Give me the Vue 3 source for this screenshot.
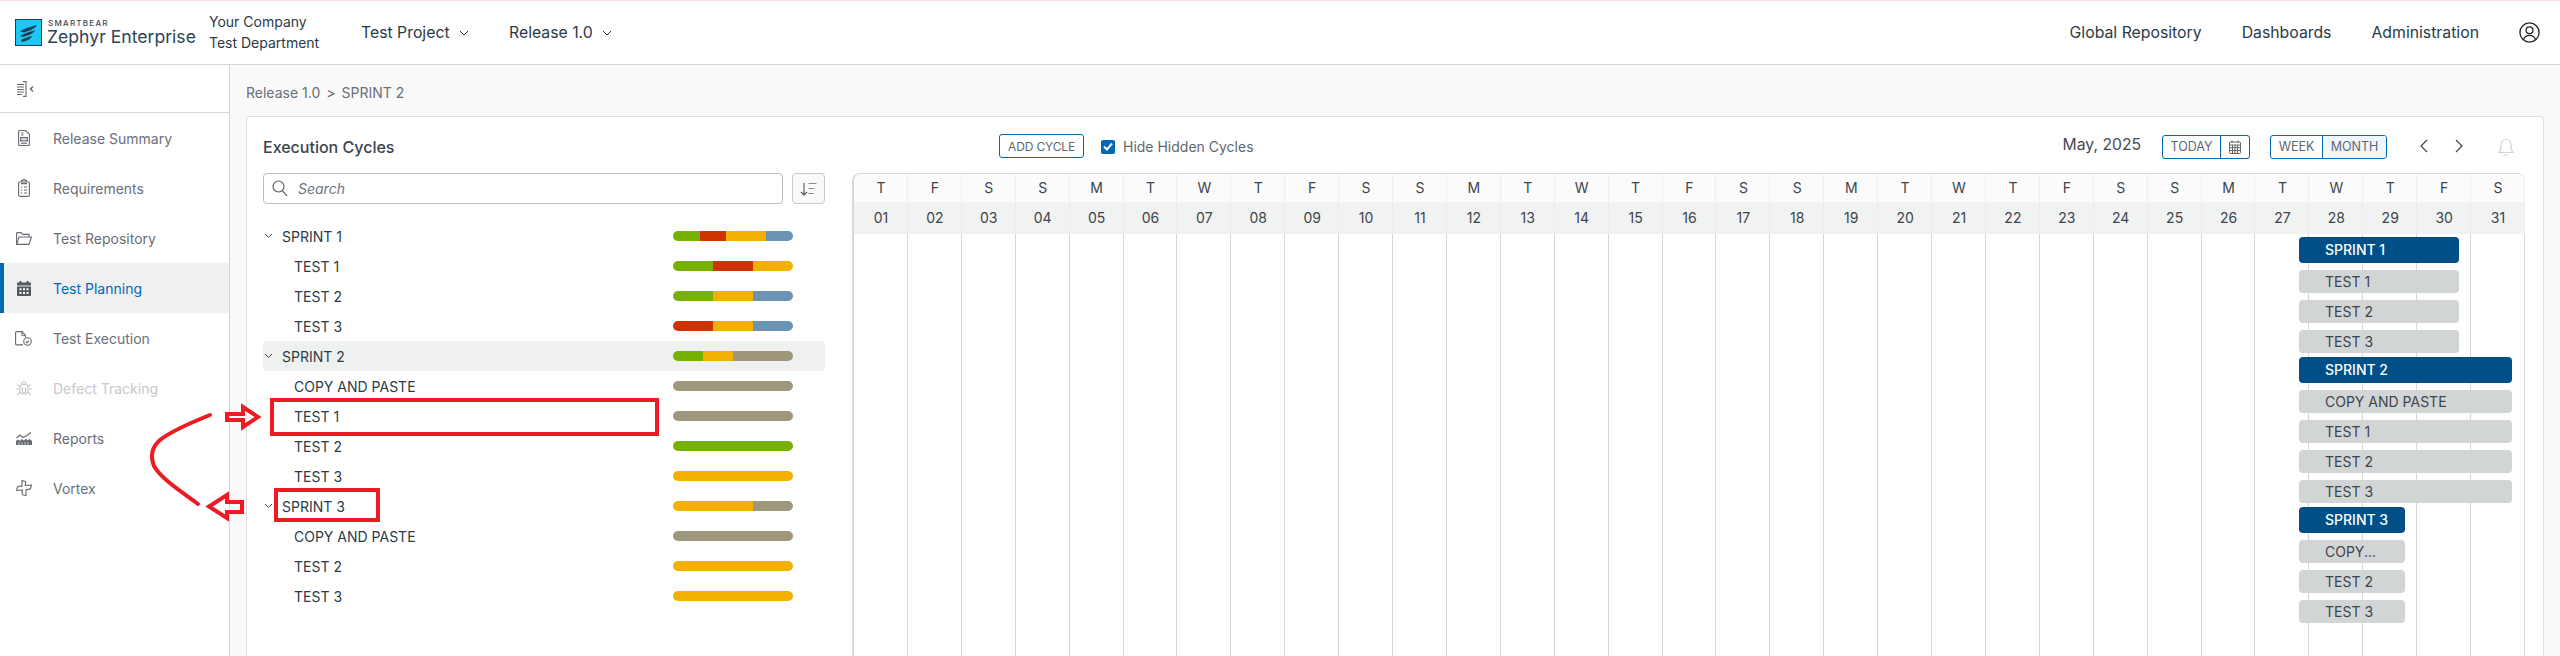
<script setup>
const navItems = [
  { label: 'Release Summary', icon: 'summary' },
  { label: 'Requirements', icon: 'req' },
  { label: 'Test Repository', icon: 'folder' },
  { label: 'Test Planning', icon: 'cal', active: true },
  { label: 'Test Execution', icon: 'exec' },
  { label: 'Defect Tracking', icon: 'bug', disabled: true },
  { label: 'Reports', icon: 'reports' },
  { label: 'Vortex', icon: 'vortex' }
]
const G = '#76b000', R = '#cc3300', Y = '#f4b000', B = '#6b94b4', N = '#9e977b'
const rows = [
  { name: 'SPRINT 1', sprint: true, bar: [[G, 2], [R, 2], [Y, 3], [B, 2]], w: 160 },
  { name: 'TEST 1', bar: [[G, 1], [R, 1], [Y, 1]], w: 160 },
  { name: 'TEST 2', bar: [[G, 1], [Y, 1], [B, 1]], w: 160 },
  { name: 'TEST 3', bar: [[R, 1], [Y, 1], [B, 1]], w: 160 },
  { name: 'SPRINT 2', sprint: true, selected: true, bar: [[G, 1], [Y, 1], [N, 2]], w: 213 },
  { name: 'COPY AND PASTE', bar: [[N, 1]], w: 213 },
  { name: 'TEST 1', bar: [[N, 1]], w: 213 },
  { name: 'TEST 2', bar: [[G, 1]], w: 213 },
  { name: 'TEST 3', bar: [[Y, 1]], w: 213 },
  { name: 'SPRINT 3', sprint: true, bar: [[Y, 2], [N, 1]], w: 106 },
  { name: 'COPY AND PASTE', short: 'COPY...', bar: [[N, 1]], w: 106 },
  { name: 'TEST 2', bar: [[Y, 1]], w: 106 },
  { name: 'TEST 3', bar: [[Y, 1]], w: 106 }
]
const letters = ['T', 'F', 'S', 'S', 'M', 'T', 'W']
const days = Array.from({ length: 31 }, (_, i) => ({
  w: letters[i % 7],
  d: String(i + 1).padStart(2, '0')
}))
const ganttStart = 1445
function ganttStyle(r) {
  return { marginLeft: ganttStart + 'px', width: r.w + 'px' }
}
</script>

<template>
  <div class="app">
    <header class="topbar">
      <div class="logo">
        <svg class="logo-mark" width="27" height="27" viewBox="0 0 27 27">
          <rect x="0.5" y="0.5" width="26" height="26" fill="#1cc8f6" stroke="#1d4054" />
          <path d="M5 12.500C10 9 16 7.500 22 6C20 10 15 11.500 9 13.500ZM5 17C10 14 15 12.500 20 11.500C18 15 13 16.500 8 18ZM6 21C10 19 14 17.500 17 17C16 20 12 22 7 23Z" fill="#1d4054" />
        </svg>
        <div class="logo-text">
          <span class="brand-small">SMARTBEAR</span>
          <span class="brand-big">Zephyr Enterprise</span>
        </div>
      </div>
      <div class="org">
        <span>Your Company</span>
        <span>Test Department</span>
      </div>
      <div class="picker first">Test Project
        <svg width="10" height="6" viewBox="0 0 10 6"><path d="M1 1l4 4 4-4" fill="none" stroke="#333" /></svg>
      </div>
      <div class="picker second">Release 1.0
        <svg width="10" height="6" viewBox="0 0 10 6"><path d="M1 1l4 4 4-4" fill="none" stroke="#333" /></svg>
      </div>
      <nav class="topnav">
        <a>Global Repository</a>
        <a>Dashboards</a>
        <a>Administration</a>
        <svg class="user" width="21" height="21" viewBox="0 0 21 21" fill="none" stroke="#222" stroke-width="1.3">
          <circle cx="10.5" cy="10.5" r="9.6" />
          <circle cx="10.5" cy="8.3" r="3.4" />
          <path d="M4.6 17.5c.8-3 3-4.2 5.9-4.2s5.100 1.200 5.900 4.200" />
        </svg>
      </nav>
    </header>

    <div class="main">
      <aside class="sidebar">
        <div class="toggle">
          <svg width="17" height="16" viewBox="0 0 17 16" fill="none" stroke="#666a70" stroke-width="1.100">
            <path d="M0 3.500h7M0 6h7M0 8.500h7M0 11h7M0 13.500h5" />
            <path d="M6 .6h3V15.400H6" />
            <path d="M16 5.500L13.500 8l2.500 2.500" stroke-width="1.500" />
          </svg>
        </div>
        <div
          v-for="item in navItems"
          :key="item.label"
          class="nav-item"
          :class="{ active: item.active, disabled: item.disabled }"
        >
          <span class="nav-icon">
            <svg v-if="item.icon === 'summary'" width="12" height="16" viewBox="0 0 12 16" fill="none" stroke="#666a70" stroke-width="1.100">
              <path d="M.6 1.500a1 1 0 0 1 1-1h6l3.800 3.800v10.200a1 1 0 0 1-1 1H1.600a1 1 0 0 1-1-1z" />
              <path d="M3 3h2.500M3 5h2.500" />
              <rect x="2.600" y="7.500" width="6.800" height="3.500" fill="#666a70" fill-opacity=".25" />
              <path d="M3 13.300h6" />
            </svg>
            <svg v-else-if="item.icon === 'req'" width="12" height="18" viewBox="0 0 12 18" fill="none" stroke="#666a70" stroke-width="1.100">
              <rect x=".6" y="3" width="10.800" height="14.400" rx="1.500" />
              <path d="M3.500 3V1.500h1.500a1 1 0 0 1 2 0h1.500V3M3 4.600h6" />
              <path d="M2.800 8h1.500M6 8h3.200M2.800 11h1.500M6 11h3.200M2.800 14h1.500M6 14h3.200" />
            </svg>
            <svg v-else-if="item.icon === 'folder'" width="16" height="13" viewBox="0 0 16 13" fill="none" stroke="#666a70" stroke-width="1.100">
              <path d="M.6 12.400V1.200a.6.6 0 0 1 .6-.6h4l1.500 1.800h6.300v2.600" />
              <path d="M.6 12.400L3 5H15.400L13 12.400z" />
            </svg>
            <svg v-else-if="item.icon === 'cal'" width="14" height="15" viewBox="0 0 14 15">
              <path d="M2.500 0h2v1.500h5V0h2v1.500H14V4.500H0V1.500h2.500zM0 5.500h14v8.500a1 1 0 0 1-1 1H1a1 1 0 0 1-1-1z" fill="#55595e" />
              <path d="M2.500 7.300h2v2h-2zM6 7.300h2v2H6zM9.500 7.300h2v2h-2zM2.500 11h2v2h-2zM6 11h2v2H6zM9.500 11h2v2h-2z" fill="#fff" />
            </svg>
            <svg v-else-if="item.icon === 'exec'" width="17" height="15" viewBox="0 0 17 15" fill="none" stroke="#666a70" stroke-width="1.100">
              <path d="M8 13.900H1.600a1 1 0 0 1-1-1V1.600a1 1 0 0 1 1-1H7l3.400 3.600v2.300" />
              <path d="M7 .6v3.600h3.400" />
              <circle cx="12.500" cy="10.500" r="3.800" />
              <path d="M10.800 10.500l1.200 1.200 2-2" />
            </svg>
            <svg v-else-if="item.icon === 'bug'" width="16" height="16" viewBox="0 0 16 16" fill="none" stroke="#c6c8ca" stroke-width="1.100">
              <rect x="4" y="4.500" width="8" height="9.500" rx="3.500" />
              <path d="M5.500 4.500a2.500 2.500 0 0 1 5 0" />
              <path d="M6.500 7v5.500h3V7M4 6.500L1.500 4.500M12 6.500l2.500-2M4 9H0M12 9h4M4 12l-3 3M12 12l3 3" />
            </svg>
            <svg v-else-if="item.icon === 'reports'" width="16" height="13" viewBox="0 0 16 13" fill="none" stroke="#666a70" stroke-width="1.100">
              <path d="M.5 6L4 3l3 2.500L10 4l5-3.500" />
              <path d="M0 13V9l2-1.500L4 9l1.500-2L8 8.500 10 6.500l1.500 2L13.500 7 16 9v4z" fill="#666a70" stroke="none" />
              <path d="M3 13V10M6 13V10M9 13V10M12 13V10" stroke="#fff" stroke-width=".6" />
            </svg>
            <svg v-else width="16" height="16" viewBox="0 0 16 16" fill="none" stroke="#666a70" stroke-width="1.100" stroke-linejoin="round">
              <path d="M6 .6L9.500 1.500Q10 4 9 5.500L15.500 5 14.500 8.500Q12 10 10 9.500L10 15.400 7 15Q5.500 12.500 6.500 10L.6 10.500 1.500 7Q4 5.500 6 6.500Z" />
            </svg>
          </span>
          <span class="nav-label">{{ item.label }}</span>
        </div>
      </aside>

      <section class="content">
        <div class="crumbs"><span>Release 1.0</span><span>&gt;</span><span>SPRINT 2</span></div>
        <div class="card">
          <div class="left-pane">
            <h2 class="title">Execution Cycles</h2>
            <div class="search-row">
              <div class="search">
                <svg width="16" height="17" viewBox="0 0 16 17" fill="none" stroke="#555" stroke-width="1.100">
                  <circle cx="6.500" cy="6.500" r="5.500" />
                  <path d="M10.500 10.800l4.500 5" />
                </svg>
                <span>Search</span>
              </div>
              <button class="sort">
                <svg width="18" height="14" viewBox="0 0 18 14" fill="none" stroke="#555" stroke-width="1.100">
                  <path d="M4 1v12M1 10l3 3 3-3" />
                  <path d="M8.500 1.500h8M8.500 6.500h6M8.500 11.500h5" stroke="#888" />
                </svg>
              </button>
            </div>
            <div class="tree">
              <div
                v-for="(r, i) in rows"
                :key="i"
                class="tree-row"
                :class="{ sprint: r.sprint, selected: r.selected }"
              >
                <svg v-if="r.sprint" class="chev" width="9" height="6" viewBox="0 0 9 6">
                  <path d="M1 1l3.500 3.500L8 1" fill="none" stroke="#444" />
                </svg>
                <span class="tree-name">{{ r.name }}</span>
                <span class="status-bar">
                  <i v-for="(s, j) in r.bar" :key="j" :style="{ background: s[0], flexGrow: s[1] }"></i>
                </span>
              </div>
            </div>
          </div>

          <div class="right-pane">
            <div class="toolbar">
              <button class="btn add">ADD CYCLE</button>
              <label class="check">
                <span class="box">
                  <svg width="10" height="9" viewBox="0 0 10 9"><path d="M1 4.500l3 3L9 1.500" fill="none" stroke="#fff" stroke-width="2" /></svg>
                </span>
                Hide Hidden Cycles
              </label>
              <span class="month">May, 2025</span>
              <div class="btn-group today-group">
                <span class="seg today">TODAY</span>
                <span class="seg calbtn">
                  <svg width="12" height="14" viewBox="0 0 12 14" fill="none" stroke="#666" stroke-width="1">
                    <rect x=".5" y="2" width="11" height="11.500" rx="1" />
                    <path d="M.5 5h11M3 .5V3M9 .5V3M.5 7.700h11M.5 10.500h11M3.500 5v8.500M6 5v8.500M8.500 5v8.500" />
                  </svg>
                </span>
              </div>
              <div class="btn-group view-group">
                <span class="seg week">WEEK</span>
                <span class="seg monthseg">MONTH</span>
              </div>
              <svg class="arrow a1" width="8" height="14" viewBox="0 0 8 14"><path d="M7 1L1 7l6 6" fill="none" stroke="#444" stroke-width="1.200" /></svg>
              <svg class="arrow a2" width="8" height="14" viewBox="0 0 8 14"><path d="M1 1l6 6-6 6" fill="none" stroke="#444" stroke-width="1.200" /></svg>
              <svg class="bell" width="16" height="19" viewBox="0 0 16 19" fill="none" stroke="#cfd1d3" stroke-width="1.200">
                <path d="M8 1.500c-3 0-5 2.300-5 5.500v4L1 14.500h14L13 11V7c0-3.200-2-5.500-5-5.500z" />
                <path d="M6 16.500c.5 1 3.500 1 4 0" />
              </svg>
            </div>

            <div class="calendar">
              <div class="grid-lines">
                <span v-for="d in days" :key="d.d"></span>
              </div>
              <div class="cal-head weekdays">
                <span v-for="d in days" :key="d.d">{{ d.w }}</span>
              </div>
              <div class="cal-head dates">
                <span v-for="d in days" :key="d.d">{{ d.d }}</span>
              </div>
              <div class="gantt">
                <div v-for="(r, i) in rows" :key="i" class="gantt-row" :class="{ sprint: r.sprint }">
                  <div class="gantt-bar" :style="ganttStyle(r)">{{ r.short || r.name }}</div>
                </div>
              </div>
            </div>
          </div>
        </div>
      </section>
    </div>

    <svg class="annotations" width="700" height="200" viewBox="0 0 700 200" fill="none" stroke="#ed1c24" stroke-width="4">
      <rect x="272" y="70" width="385" height="34" />
      <rect x="276" y="160" width="102" height="30" />
      <path d="M227 84h16v-7l15 10-15 10v-7h-16z" />
      <path d="M242 172h-15v-7L209 176.500 227 188v-6h15z" />
      <path d="M210 85C190 93 170 102 160 110C152 117 150 126 154 136C162 150 184 163 198 174" stroke-linecap="round" />
    </svg>
  </div>
</template>

<style>
html, body { margin: 0; padding: 0; background: #fff; overflow: hidden; }
</style>

<style scoped>
.app {
  position: relative;
  width: 2560px;
  height: 656px;
  overflow: hidden;
  display: flex;
  flex-direction: column;
  font-family: Inter, "Liberation Sans", sans-serif;
  font-size: 14px;
  color: #2c3a47;
  background: #fff;
}
.topbar {
  height: 63px;
  flex: none;
  display: flex;
  align-items: center;
  border-top: 1px solid #f9dfdb;
  border-bottom: 1px solid #d6d8d8;
  padding-left: 15px;
  padding-right: 20px;
}
.logo { display: flex; align-items: center; width: 194px; flex: none; }
.logo-mark { flex: none; }
.logo-text { display: flex; flex-direction: column; margin-left: 5px; line-height: 1; }
.brand-small { font-size: 8px; letter-spacing: 1.250px; color: #3b4a57; font-weight: 500; margin-left: 1px; margin-bottom: 1px; white-space: nowrap; }
.brand-big { font-size: 17.600px; color: #2c4356; white-space: nowrap; }
.org { display: flex; flex-direction: column; gap: 7px; line-height: 14px; color: #2c3a47; font-size: 14px; width: 152px; flex: none; }
.picker { display: flex; align-items: center; gap: 9px; font-size: 15.800px; color: #2c3a47; white-space: nowrap; flex: none; }
.picker.first { width: 148px; }
.topnav { margin-left: auto; display: flex; align-items: center; font-size: 15.800px; color: #2c3a47; }
.topnav a { margin-right: 40px; }
.main { flex: 1; display: flex; min-height: 0; }
.sidebar { width: 229px; flex: none; border-right: 1px solid #d6d8d8; background: #fff; }
.toggle {
  height: 47px;
  border-bottom: 1px solid #d6d8d8;
  display: flex;
  align-items: center;
  padding-left: 17px;
}
.nav-item { height: 50px; display: flex; align-items: center; color: #68707a; box-sizing: border-box; padding-left: 15px; }
.nav-item.active { background: #eff1f1; color: #0069b4; border-left: 4px solid #0069b4; padding-left: 11px; }
.nav-item.disabled { color: #c6c8ca; }
.nav-icon { width: 17px; margin-right: 21px; flex: none; display: flex; align-items: center; justify-content: center; }
.content { flex: 1; background: #f9f9f9; padding: 0 16px; display: flex; flex-direction: column; min-width: 0; }
.crumbs { height: 51px; line-height: 55px; color: #68707a; flex: none; display: flex; gap: 6px; }
.card {
  flex: 1;
  background: #fff;
  border: 1px solid #dcdede;
  border-bottom: 0;
  border-radius: 4px 4px 0 0;
  display: flex;
  min-height: 0;
}
.left-pane { width: 562px; margin-left: 16px; flex: none; }
.title { margin: 0; font-size: 16px; font-weight: 500; height: 56px; line-height: 60px; color: #3a444e; }
.search-row { display: flex; gap: 9px; }
.search {
  width: 520px;
  height: 31px;
  box-sizing: border-box;
  border: 1px solid #bcbfc1;
  border-radius: 4px;
  display: flex;
  align-items: center;
  padding-left: 8px;
  gap: 10px;
  color: #6d757c;
  font-style: italic;
  font-size: 14px;
}
.sort {
  width: 33px;
  height: 31px;
  box-sizing: border-box;
  padding: 0;
  border: 1px solid #c8cacc;
  border-radius: 4px;
  background: #f9f9f9;
  display: flex;
  align-items: center;
  justify-content: center;
}
.tree { margin-top: 17px; }
.tree-row { height: 30px; display: flex; align-items: center; padding-left: 31px; font-size: 14px; color: #2c3a47; border-radius: 4px; }
.tree-row.sprint { padding-left: 0; }
.chev { margin-left: 1px; margin-right: 9px; flex: none; }
.tree-row.selected { background: #eff1f1; }
.tree-name { white-space: nowrap; }
.status-bar {
  margin-left: auto;
  margin-right: 32px;
  width: 120px;
  height: 10px;
  border-radius: 5px;
  overflow: hidden;
  display: flex;
  flex: none;
}
.status-bar i { flex-basis: 0; display: block; }
.right-pane { flex: 1; min-width: 0; margin-left: 27px; display: flex; flex-direction: column; }
.toolbar { height: 56px; flex: none; display: flex; align-items: center; padding-left: 147px; padding-right: 29px; box-sizing: border-box; }
.btn { font-family: inherit; }
.add {
  width: 85px;
  height: 24px;
  margin-top: 2px;
  padding: 0;
  box-sizing: border-box;
  border: 1px solid #0069b4;
  border-radius: 3px;
  background: #fff;
  color: #5d6870;
  font-size: 12px;
  letter-spacing: -.15px;
  flex: none;
}
.check { margin-left: 17px; margin-top: 3px; display: flex; align-items: center; gap: 8px; color: #5d6870; font-size: 14px; line-height: 16px; white-space: nowrap; }
.box { width: 14px; height: 14px; background: #0069b4; border-radius: 2px; display: flex; align-items: center; justify-content: center; }
.month { margin-left: auto; margin-right: 21px; font-size: 15.700px; line-height: 20px; color: #444b52; white-space: nowrap; }
.btn-group {
  height: 24px;
  margin-top: 3px;
  box-sizing: border-box;
  border: 1px solid #0069b4;
  border-radius: 3px;
  display: flex;
  color: #5d6870;
  font-size: 12.500px;
  overflow: hidden;
  flex: none;
}
.seg { display: flex; align-items: center; justify-content: center; box-sizing: border-box; }
.today-group { width: 88px; margin-right: 20px; }
.today { width: 58px; border-right: 1px solid #0069b4; }
.calbtn { flex: 1; }
.view-group { width: 117px; margin-right: 33px; }
.week { width: 52px; border-right: 1px solid #0069b4; }
.monthseg { flex: 1; background: #eef7fc; }
.arrow { flex: none; margin-top: 2px; }
.a1 { margin-right: 27px; }
.a2 { margin-right: 35px; }
.bell { flex: none; margin-top: 4px; }
.calendar {
  position: relative;
  flex: 1;
  width: 1673px;
  border-left: 2px solid #d6d8d8;
  border-top: 1px solid #d6d8d8;
  border-top-left-radius: 8px;
  border-top-right-radius: 8px;
  box-sizing: border-box;
  overflow: hidden;
}
.grid-lines { position: absolute; inset: 0; display: grid; grid-template-columns: repeat(31, 1fr); }
.grid-lines span { border-right: 1px solid #d6d8d8; }
.cal-head { position: relative; display: grid; grid-template-columns: repeat(31, 1fr); text-align: center; color: #3c444c; }
.cal-head span { display: block; }
.weekdays { height: 28px; line-height: 28px; background: rgba(249, 249, 249, .7); }
.dates { height: 32px; line-height: 32px; background: rgba(238, 240, 240, .85); }
.gantt { position: relative; padding-top: 2px; }
.gantt-row { height: 30px; display: flex; align-items: flex-start; padding-top: 4px; box-sizing: border-box; }
.gantt-row.sprint { padding-top: 1px; }
.gantt-bar {
  height: 23px;
  line-height: 23px;
  box-sizing: border-box;
  padding-left: 26px;
  background: #d2d5d5;
  border-radius: 4px;
  color: #3c444c;
  white-space: nowrap;
  overflow: hidden;
  flex: none;
}
.gantt-row.sprint .gantt-bar { height: 26px; line-height: 25px; background: #004f86; color: #fff; font-weight: 500; }
.annotations { position: absolute; left: 0; top: 330px; pointer-events: none; }
</style>
